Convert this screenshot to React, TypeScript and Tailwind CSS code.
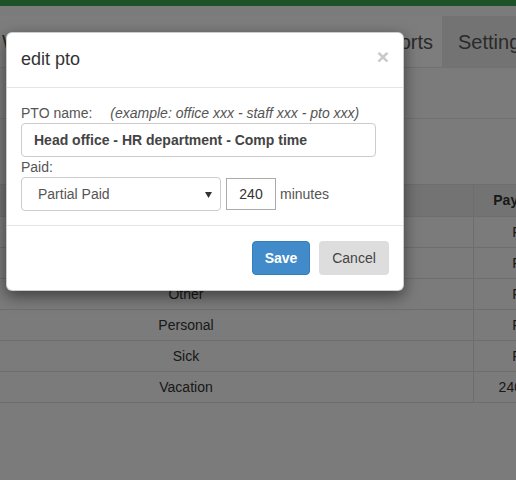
import React from "react";

const rows = [
  { name: "Bereavement", pay: "Full" },
  { name: "Holiday", pay: "Full" },
  { name: "Other", pay: "Full" },
  { name: "Personal", pay: "Full" },
  { name: "Sick", pay: "Full" },
  { name: "Vacation", pay: "240 min" },
];

export default function App() {
  return (
    <div className="relative w-[516px] h-[480px] overflow-hidden bg-[#f6f6f6] font-['Liberation_Sans',Arial,sans-serif] text-[14px] text-[#333]">
      {/* page */}
      <div className="h-[6px] bg-[#3aa24e]" />
      <div className="h-[10px]" />
      <div className="overflow-hidden h-[52px] bg-[#fbfbfb] border-b border-[#e2e2e2]">
        <div className="flex w-[570px] h-[51px] items-center text-[20px] text-[#555]">
          <div className="pl-[2px] shrink-0">Welcome</div>
          <div className="flex-1" />
          <div className="shrink-0 pr-[9px]">Reports</div>
          <div className="shrink-0 h-full flex items-center pl-[16px] w-[128px] bg-[#e6e6e6]">Settings</div>
        </div>
      </div>
      <div className="h-[51px] border-b border-[#e0e0e0]" />
      <div className="h-[65px]" />
      <div className="ml-[-101px] w-[674px]">
        <div className="grid grid-cols-[574px_100px] h-[33px] border-t border-b border-[#dcdcdc] bg-[#e6e6e6] font-bold">
          <div className="flex items-center justify-center">Name</div>
          <div className="flex items-center justify-center border-l border-[#dcdcdc]">Pay Type</div>
        </div>
        {rows.map((r) => (
          <div key={r.name} className="grid grid-cols-[574px_100px] h-[31px] border-b border-[#dcdcdc]">
            <div className="flex items-center justify-center">{r.name}</div>
            <div className="flex items-center justify-center border-l border-[#dcdcdc]">{r.pay}</div>
          </div>
        ))}
      </div>

      {/* overlay */}
      <div className="absolute inset-0 bg-black/50" />

      {/* modal */}
      <div className="absolute left-[6px] top-[32px] w-[398px] bg-white rounded-[6px] border border-black/20 shadow-[0_5px_15px_rgba(0,0,0,0.5)]">
        <div className="flex items-start justify-between pt-[13px] pb-[15px] px-[14px] border-b border-[#e5e5e5]">
          <div className="text-[18px] leading-[26px] text-[#333]">edit pto</div>
          <div className="text-[21px] leading-[21px] font-bold text-[#c8c8c8] mt-[0px]">×</div>
        </div>
        <div className="pt-[15px] pb-[14px] px-[14px]">
          <div className="h-[20px] leading-[20px] text-[#555] flex">
            <span>PTO name:</span>
            <span className="ml-[18px] italic text-[#555]">(example: office xxx - staff xxx - pto xxx)</span>
          </div>
          <div className="w-[355px] h-[34px] rounded-[4px] border border-[#ccc] flex items-center pl-[12px] font-bold text-[#444]">
            Head office - HR department - Comp time
          </div>
          <div className="h-[20px] leading-[20px] text-[#555]">Paid:</div>
          <div className="flex items-center h-[34px]">
            <div className="relative w-[200px] h-[34px] rounded-[4px] border border-[#ccc] flex items-center pl-[16px] text-[#555]">
              Partial Paid
              <svg className="absolute right-[8px] top-[14px]" width="7" height="6" viewBox="0 0 7 6">
                <path d="M0 0 L7 0 L3.5 6 Z" fill="#333" />
              </svg>
            </div>
            <div className="ml-[5px] w-[50px] h-[32px] border border-[#aaa] flex items-center justify-center text-[#333]">240</div>
            <div className="ml-[4px] text-[#555]">minutes</div>
          </div>
        </div>
        <div className="flex justify-end gap-[9px] pt-[15px] pb-[15px] px-[14px] border-t border-[#e5e5e5]">
          <div className="w-[58px] h-[34px] rounded-[4px] bg-[#428bca] border border-[#357ebd] text-white font-bold flex items-center justify-center">Save</div>
          <div className="w-[70px] h-[34px] rounded-[4px] bg-[#dddddd] text-[#444] flex items-center justify-center">Cancel</div>
        </div>
      </div>
    </div>
  );
}
